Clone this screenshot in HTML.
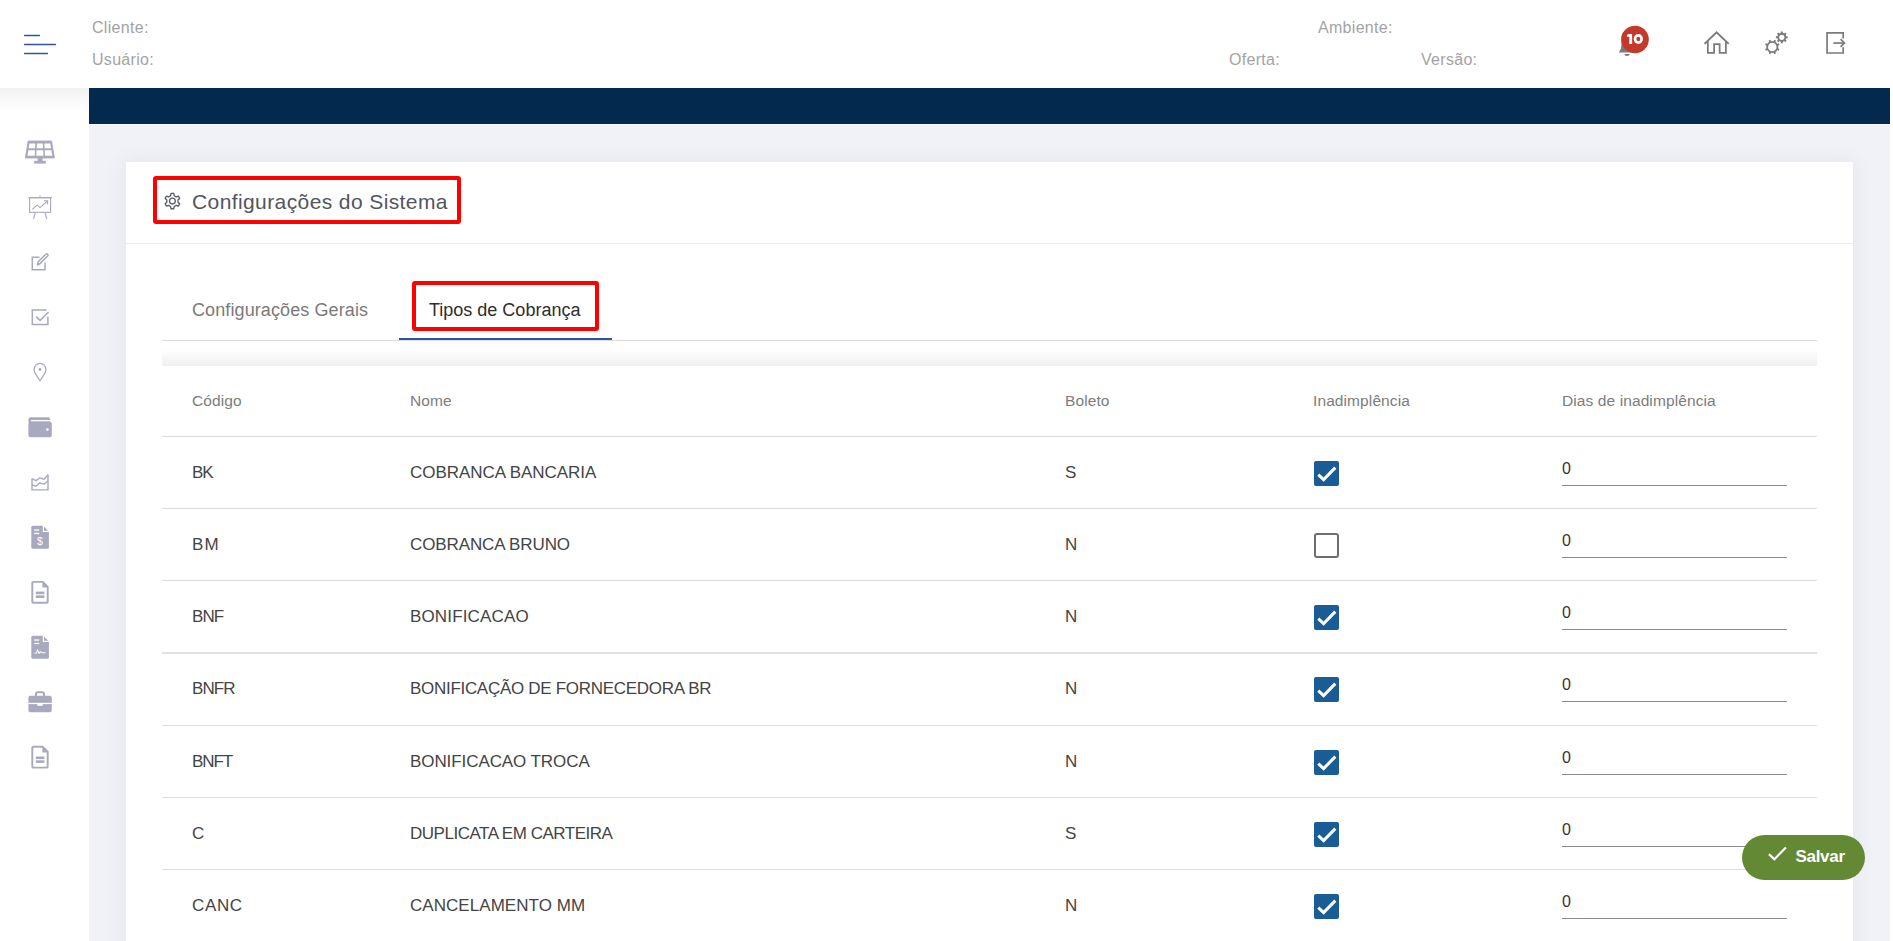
<!DOCTYPE html>
<html><head><meta charset="utf-8">
<style>
*{box-sizing:border-box;margin:0;padding:0}
html,body{width:1893px;height:941px;overflow:hidden;background:#fff;font-family:"Liberation Sans",sans-serif;position:relative}
.abs{position:absolute}
.t{position:absolute;white-space:nowrap;line-height:1}
.hdr{left:0;top:0;width:1893px;height:88px;background:#fff}
.ham{left:24px;height:1px;background:#3c55b5}
.hlbl{color:#a3a3a3;font-size:16px;letter-spacing:0.3px}
.side{left:0;top:88px;width:89px;height:853px;background:#fff}
.sideshadow{left:0;top:88px;width:89px;height:24px;background:linear-gradient(#f2f2f2,#fff)}
.navy{left:89px;top:88px;width:1801px;height:36px;background:#032a4e}
.gray{left:89px;top:124px;width:1801px;height:817px;background:#f1f2f7;border-top:1px solid #f9f9fc}
.card{left:126px;top:162px;width:1727px;height:800px;background:#fff;box-shadow:0 0 20px 2px rgba(70,70,110,0.065)}
.ico{position:absolute}
.sep{position:absolute;left:162px;width:1655px;height:1px;background:#dedede}
.cell{position:absolute;white-space:nowrap;line-height:1;color:#444;font-size:17px;letter-spacing:-0.1px}
.hcell{position:absolute;white-space:nowrap;line-height:1;color:#7c7c7c;font-size:15.5px;letter-spacing:0.1px}
.cb{position:absolute;left:1314px;width:25px;height:25px;border-radius:2px;background:#1a5c95}
.cbu{position:absolute;left:1314px;width:25px;height:25px;border-radius:3px;border:2px solid #6e6e6e;background:#fff}
.zero{position:absolute;left:1562px;white-space:nowrap;line-height:1;color:#333;font-size:16px}
.ul{position:absolute;left:1562px;width:225px;height:1px;background:#8c8c8c}
</style></head>
<body>
<!-- header -->
<div class="abs hdr"></div>
<svg class="ico" style="left:0;top:0" width="89" height="88" viewBox="0 0 89 88"><g stroke="#3451a9" stroke-width="1.3" stroke-linecap="round"><path d="M24.6 35.5 H39.4 M24.6 44.5 H55.4 M24.6 53.5 H47.4"/></g></svg>
<svg class="ico" style="left:1600px;top:15px" width="60" height="50" viewBox="0 0 60 50"><path d="M27 16 Q21.5 16 21.5 23 V29.5 Q21.5 34 19.2 36.5 Q18.6 37.6 19.8 37.6 H34.2 Q35.4 37.6 34.8 36.5 Q32.5 34 32.5 29.5 V23 Q32.5 16 27 16Z" fill="#7b7b7b"/><path d="M24.3 39 Q24.3 41 27 41 Q29.7 41 29.7 39Z" fill="#7b7b7b"/><circle cx="35" cy="24.5" r="13.8" fill="#c3392b"/></svg>
<svg class="ico" style="left:1600px;top:15px" width="60" height="50" viewBox="0 0 60 50"><path d="M27.1 19.9 L28.6 19 H32.1 V29 H29.3 V21.7 H27.1Z" fill="#fff"/><ellipse cx="38.3" cy="24" rx="3.3" ry="3.6" fill="none" stroke="#fff" stroke-width="2.7"/></svg>
<svg class="ico" style="left:1698px;top:25px" width="40" height="35" viewBox="0 0 40 35"><g fill="none" stroke="#7b7b7b" stroke-width="1.75"><path d="M6.5 18.9 L18.6 7.3 L30.7 18.9" stroke-width="2"/><path d="M9.85 16.2 V27.85 H16.1 V19.05 H21.65 V27.85 H27.9 V16.2"/></g></svg>
<svg class="ico" style="left:1758px;top:25px" width="40" height="35" viewBox="0 0 40 35"><g fill="none" stroke="#7b7b7b"><circle cx="14.3" cy="22.0" r="5.15" stroke-width="1.8"/><circle cx="23.8" cy="12.3" r="3.55" stroke-width="1.9"/><path d="M18.92 23.91 L21.14 24.83 M16.21 26.62 L17.13 28.84 M12.39 26.62 L11.47 28.84 M9.68 23.91 L7.46 24.83 M9.68 20.09 L7.46 19.17 M12.39 17.38 L11.47 15.16 M16.21 17.38 L17.13 15.16 M18.92 20.09 L21.14 19.17 " stroke-width="1.8"/><path d="M27.40 12.30 L29.70 12.30 M26.35 14.85 L27.97 16.47 M23.80 15.90 L23.80 18.20 M21.25 14.85 L19.63 16.47 M20.20 12.30 L17.90 12.30 M21.25 9.75 L19.63 8.13 M23.80 8.70 L23.80 6.40 M26.35 9.75 L27.97 8.13 " stroke-width="2"/></g></svg>
<svg class="ico" style="left:1818px;top:25px" width="40" height="35" viewBox="0 0 40 35"><g fill="none" stroke="#7b7b7b" stroke-width="1.7"><path d="M25.2 13.4 V7.92 H9.05 V28 H25.2 V22.3"/><path d="M15.3 18.05 H26.6"/><path d="M22.6 14.2 L26.4 18.05 L22.6 21.9"/></g></svg>
<div class="t hlbl" style="left:92px;top:19.5px">Cliente:</div>
<div class="t hlbl" style="left:92px;top:51.5px">Usuário:</div>
<div class="t hlbl" style="left:1318px;top:19.5px">Ambiente:</div>
<div class="t hlbl" style="left:1229px;top:51.5px">Oferta:</div>
<div class="t hlbl" style="left:1421px;top:51.5px">Versão:</div>

<!-- sidebar -->
<div class="abs side"></div>
<div class="abs sideshadow"></div>
<svg class="ico" style="left:0;top:0" width="89" height="800" viewBox="0 0 89 800"><path d="M28.10 141 L51.60 141 L54.40 158 L25.30 158Z" fill="#a8a9bf" stroke="#a8a9bf" stroke-width="0.8" stroke-linejoin="round"/><path d="M29.49 143.5 L35.33 143.5 L35.07 148.3 L28.70 148.3Z" fill="#fff"/><path d="M36.93 143.5 L42.77 143.5 L43.03 148.3 L36.67 148.3Z" fill="#fff"/><path d="M44.37 143.5 L50.21 143.5 L51.00 148.3 L44.63 148.3Z" fill="#fff"/><path d="M28.38 150.2 L34.96 150.2 L34.66 155.7 L27.48 155.7Z" fill="#fff"/><path d="M36.56 150.2 L43.14 150.2 L43.44 155.7 L36.26 155.7Z" fill="#fff"/><path d="M44.74 150.2 L51.32 150.2 L52.22 155.7 L45.04 155.7Z" fill="#fff"/><rect x="37.6" y="157.5" width="5" height="3.6" fill="#a8a9bf"/><rect x="34.2" y="160.8" width="11.6" height="2.8" fill="#a8a9bf"/><g fill="none" stroke="#a8a9bf" stroke-width="1.1"><rect x="29.6" y="197.7" width="21" height="14.6"/><path d="M28.2 197.7 H52"/><path d="M40 195.5 V197.7"/><path d="M35.3 212.3 L33.6 219 M45 212.3 L46.7 219"/><path d="M32.3 209.4 L37.2 205.2 L40.1 207.6 L47.4 201"/><path d="M44 200.8 H47.6 V204.3"/></g><g fill="none" stroke="#a8a9bf" stroke-width="1.5"><path d="M39.5 257.3 H32.3 V269.8 H45 V262.5"/><path d="M37.5 265 L38.2 261.8 L45.8 254.2 Q46.8 253.4 47.6 254.2 Q48.4 255 47.6 256 L40 263.6Z" stroke-linejoin="round"/></g><g fill="none" stroke="#a8a9bf" stroke-width="1.5"><path d="M46.6 309.9 H32.3 V324.6 H47.9 V316.5"/><path d="M36.3 316.6 L40.1 320.4 L48.6 312"/></g><path d="M40 381 L35.6 373.8 Q34.1 371.4 34.1 369.3 A5.9 5.9 0 0 1 45.9 369.3 Q45.9 371.4 44.4 373.8Z" fill="none" stroke="#a8a9bf" stroke-width="1.3" stroke-linejoin="round"/><circle cx="40" cy="369.4" r="1.4" fill="#a8a9bf"/><rect x="28.4" y="417.2" width="21.8" height="6" rx="2.2" fill="#a8a9bf"/><rect x="28.4" y="421.8" width="23.4" height="15.5" rx="2.2" fill="#a8a9bf"/><rect x="31" y="420" width="19" height="1.3" fill="#fff"/><circle cx="47.3" cy="429.6" r="1.3" fill="#fff"/><g fill="none" stroke="#a8a9bf" stroke-width="1.4" stroke-linejoin="round"><path d="M32 478.6 V489.9 H48 V474.6"/><path d="M32 478.6 L36 480.6 L40 477.8 L44 479.4 L48 474.6"/><path d="M32 485 L36 486.2 L40 482.8 L44 484.2 L48 481"/></g><path d="M33 525.8 H43.2 L48.9 531.5 V547.1999999999999 Q48.9 548.6999999999999 47.4 548.6999999999999 H32.8 Q31.3 548.6999999999999 31.3 547.1999999999999 V527.3 Q31.3 525.8 33 525.8Z" fill="#a8a9bf"/><path d="M43.4 525.8 V531.4 H48.9" fill="none" stroke="#fff" stroke-width="1.2"/><rect x="34.2" y="529.4" width="5" height="1.3" fill="#fff"/><rect x="34.2" y="532.8" width="5" height="1.3" fill="#fff"/><text x="40" y="545.3" font-family="Liberation Sans" font-size="10.5" font-weight="400" fill="#fff" text-anchor="middle">$</text><path d="M33.3 581.9 H42.8 L47.7 586.8 V601.8 Q47.7 602.6999999999999 46.8 602.6999999999999 H33.2 Q32.3 602.6999999999999 32.3 601.8 V582.8 Q32.3 581.9 33.3 581.9Z" fill="none" stroke="#a8a9bf" stroke-width="1.9" stroke-linejoin="round"/><path d="M43 581.9 V586.9 H47.7" fill="#a8a9bf" stroke="#a8a9bf" stroke-width="1.2"/><rect x="35.8" y="591.6" width="8.6" height="2.6" fill="#a8a9bf"/><rect x="35.8" y="595.4" width="8.6" height="2.6" fill="#a8a9bf"/><path d="M33 635.8 H43.2 L48.9 641.5 V657.1999999999999 Q48.9 658.6999999999999 47.4 658.6999999999999 H32.8 Q31.3 658.6999999999999 31.3 657.1999999999999 V637.3 Q31.3 635.8 33 635.8Z" fill="#a8a9bf"/><path d="M43.4 635.8 V641.4 H48.9" fill="none" stroke="#fff" stroke-width="1.2"/><rect x="34.2" y="639.4" width="5" height="1.3" fill="#fff"/><rect x="34.2" y="642.8" width="5" height="1.3" fill="#fff"/><path d="M34.5 653.2 L36.5 653 L37.6 649.6 L39 653.4 L40.2 651.8 L42 652.6 L45.5 652.8" fill="none" stroke="#fff" stroke-width="1.1" stroke-linejoin="round"/><path d="M36 697 V694 Q36 692.2 37.8 692.2 H42.2 Q44 692.2 44 694 V697" fill="none" stroke="#a8a9bf" stroke-width="2"/><rect x="28.4" y="695.8" width="23.4" height="16.5" rx="2.2" fill="#a8a9bf"/><rect x="28.4" y="702.8" width="23.4" height="1.3" fill="#fff"/><rect x="37.3" y="704" width="5.4" height="1.8" fill="#fff"/><path d="M33.3 746.8 H42.8 L47.7 751.6999999999999 V766.6999999999999 Q47.7 767.5999999999999 46.8 767.5999999999999 H33.2 Q32.3 767.5999999999999 32.3 766.6999999999999 V747.6999999999999 Q32.3 746.8 33.3 746.8Z" fill="none" stroke="#a8a9bf" stroke-width="1.9" stroke-linejoin="round"/><path d="M43 746.8 V751.8 H47.7" fill="#a8a9bf" stroke="#a8a9bf" stroke-width="1.2"/><rect x="35.8" y="756.5" width="8.6" height="2.6" fill="#a8a9bf"/><rect x="35.8" y="760.3" width="8.6" height="2.6" fill="#a8a9bf"/></svg>

<!-- main -->
<div class="abs navy"></div>
<div class="abs gray"></div>
<div class="abs card"></div>


<!-- title -->
<div class="abs" style="left:153px;top:176px;width:307.5px;height:47.5px;border:4px solid #ff0000;border-radius:3px"></div>
<svg class="ico" style="left:163px;top:192px" width="19" height="19" viewBox="0 0 19 19"><g fill="none" stroke="#575a63" stroke-width="1.3" stroke-linejoin="round"><path d="M7.58 3.70 L8.07 1.47 L10.73 1.47 L11.22 3.70 L13.17 4.82 L15.35 4.13 L16.68 6.44 L14.99 7.97 L14.99 10.23 L16.68 11.76 L15.35 14.07 L13.17 13.38 L11.22 14.50 L10.73 16.73 L8.07 16.73 L7.58 14.50 L5.63 13.38 L3.45 14.07 L2.12 11.76 L3.81 10.23 L3.81 7.97 L2.12 6.44 L3.45 4.13 L5.63 4.82Z"/><circle cx="9.4" cy="9.1" r="2.9"/></g></svg>
<div class="t" style="left:192px;top:191px;font-size:21px;color:#52555e;letter-spacing:0.4px">Configurações do Sistema</div>
<div class="abs" style="left:126px;top:243px;width:1727px;height:1px;background:#ebedf2"></div>

<!-- tabs -->
<div class="t" style="left:192px;top:300.7px;font-size:18px;color:#7a7a7a;letter-spacing:0.1px">Configurações Gerais</div>
<div class="t" style="left:429px;top:300.7px;font-size:18px;color:#2d2d2d">Tipos de Cobrança</div>
<div class="abs" style="left:411.5px;top:280.5px;width:187px;height:50px;border:4px solid #ff0000;border-radius:3px"></div>
<div class="abs" style="left:162px;top:340px;width:1655px;height:1px;background:#dcdcdc"></div>
<div class="abs" style="left:399px;top:338px;width:213px;height:2px;background:#3450a8"></div>
<div class="abs" style="left:162px;top:349px;width:1655px;height:17px;background:linear-gradient(#fff,#efefef)"></div>

<!-- table header -->
<div class="hcell" style="left:192px;top:393px">Código</div>
<div class="hcell" style="left:410px;top:393px">Nome</div>
<div class="hcell" style="left:1065px;top:393px">Boleto</div>
<div class="hcell" style="left:1313px;top:393px">Inadimplência</div>
<div class="hcell" style="left:1562px;top:393px">Dias de inadimplência</div>
<div class="sep" style="top:436px"></div>
<div class="cell" style="left:192px;top:463.7px;letter-spacing:-1.100px">BK</div>
<div class="cell" style="left:410px;top:463.7px;letter-spacing:-0.050px">COBRANCA BANCARIA</div>
<div class="cell" style="left:1065px;top:463.7px">S</div>
<div class="cb" style="top:461px"><svg width="25" height="25" viewBox="0 0 25 25"><path d="M4.3 13.7 L9.6 18.6 L21.3 6.6" fill="none" stroke="#fff" stroke-width="3"/></svg></div>
<div class="zero" style="top:460.6px">0</div>
<div class="ul" style="top:485px"></div>
<div class="sep" style="top:508px"></div>
<div class="cell" style="left:192px;top:535.7px;letter-spacing:1.100px">BM</div>
<div class="cell" style="left:410px;top:535.7px;letter-spacing:-0.115px">COBRANCA BRUNO</div>
<div class="cell" style="left:1065px;top:535.7px">N</div>
<div class="cbu" style="top:533px"></div>
<div class="zero" style="top:532.6px">0</div>
<div class="ul" style="top:557px"></div>
<div class="sep" style="top:580px"></div>
<div class="cell" style="left:192px;top:607.7px;letter-spacing:-0.950px">BNF</div>
<div class="cell" style="left:410px;top:607.7px;letter-spacing:0.150px">BONIFICACAO</div>
<div class="cell" style="left:1065px;top:607.7px">N</div>
<div class="cb" style="top:605px"><svg width="25" height="25" viewBox="0 0 25 25"><path d="M4.3 13.7 L9.6 18.6 L21.3 6.6" fill="none" stroke="#fff" stroke-width="3"/></svg></div>
<div class="zero" style="top:604.6px">0</div>
<div class="ul" style="top:629px"></div>
<div class="sep" style="top:652px;background:#dfdfdf"></div>
<div class="sep" style="top:653px;background:#e0e0e0"></div>
<div class="cell" style="left:192px;top:679.7px;letter-spacing:-0.900px">BNFR</div>
<div class="cell" style="left:410px;top:679.7px;letter-spacing:-0.296px">BONIFICAÇÃO DE FORNECEDORA BR</div>
<div class="cell" style="left:1065px;top:679.7px">N</div>
<div class="cb" style="top:677px"><svg width="25" height="25" viewBox="0 0 25 25"><path d="M4.3 13.7 L9.6 18.6 L21.3 6.6" fill="none" stroke="#fff" stroke-width="3"/></svg></div>
<div class="zero" style="top:676.6px">0</div>
<div class="ul" style="top:701px"></div>
<div class="sep" style="top:725px"></div>
<div class="cell" style="left:192px;top:752.7px;letter-spacing:-1.100px">BNFT</div>
<div class="cell" style="left:410px;top:752.7px;letter-spacing:-0.081px">BONIFICACAO TROCA</div>
<div class="cell" style="left:1065px;top:752.7px">N</div>
<div class="cb" style="top:750px"><svg width="25" height="25" viewBox="0 0 25 25"><path d="M4.3 13.7 L9.6 18.6 L21.3 6.6" fill="none" stroke="#fff" stroke-width="3"/></svg></div>
<div class="zero" style="top:749.6px">0</div>
<div class="ul" style="top:774px"></div>
<div class="sep" style="top:797px"></div>
<div class="cell" style="left:192px;top:824.7px;letter-spacing:-0.100px">C</div>
<div class="cell" style="left:410px;top:824.7px;letter-spacing:-0.480px">DUPLICATA EM CARTEIRA</div>
<div class="cell" style="left:1065px;top:824.7px">S</div>
<div class="cb" style="top:822px"><svg width="25" height="25" viewBox="0 0 25 25"><path d="M4.3 13.7 L9.6 18.6 L21.3 6.6" fill="none" stroke="#fff" stroke-width="3"/></svg></div>
<div class="zero" style="top:821.6px">0</div>
<div class="ul" style="top:846px"></div>
<div class="sep" style="top:869px"></div>
<div class="cell" style="left:192px;top:896.7px;letter-spacing:0.633px">CANC</div>
<div class="cell" style="left:410px;top:896.7px;letter-spacing:0.050px">CANCELAMENTO MM</div>
<div class="cell" style="left:1065px;top:896.7px">N</div>
<div class="cb" style="top:894px"><svg width="25" height="25" viewBox="0 0 25 25"><path d="M4.3 13.7 L9.6 18.6 L21.3 6.6" fill="none" stroke="#fff" stroke-width="3"/></svg></div>
<div class="zero" style="top:893.6px">0</div>
<div class="ul" style="top:918px"></div>

<!-- save button -->
<div class="abs" style="left:1742px;top:835px;width:123px;height:45px;border-radius:23px;background:#638935"></div>
<svg class="ico" style="left:1742px;top:835px" width="123" height="45" viewBox="0 0 123 45"><path d="M26.9 19.1 L32.4 24.2 L43.9 12.5" fill="none" stroke="#fff" stroke-width="2.2"/></svg>
<div class="t" style="left:1795.5px;top:848px;font-size:17px;font-weight:700;color:#fff;letter-spacing:-0.3px">Salvar</div>

</body></html>
